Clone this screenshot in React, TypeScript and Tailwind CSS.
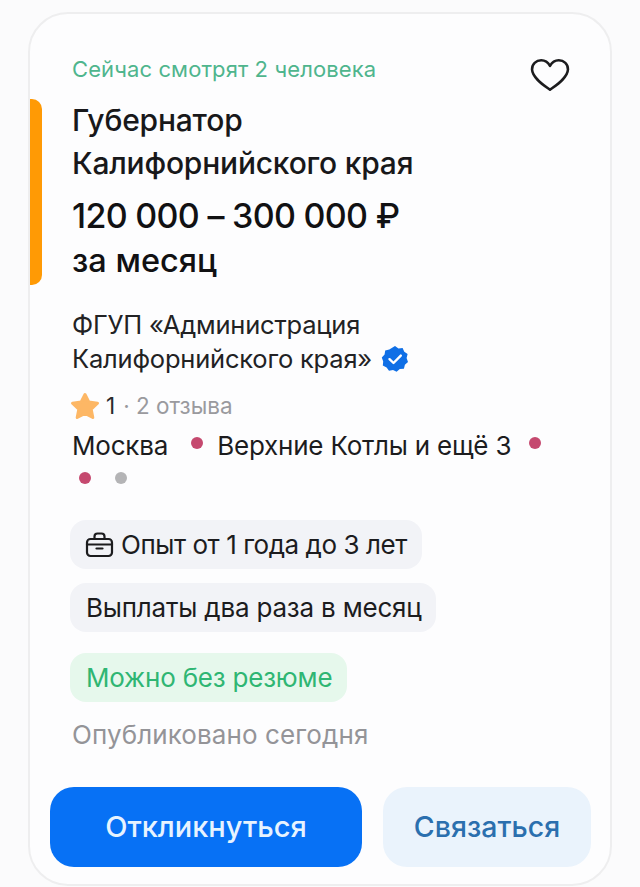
import React from 'react';

const font = { fontFamily: 'Inter, "Noto Sans", sans-serif' };

const Dot = ({ gray }: { gray?: boolean }) => (
  <span className={`inline-block w-[12px] h-[12px] rounded-full ${gray ? 'bg-[#b4b4b6]' : 'bg-[#c5496f]'}`} />
);

const Heart = () => (
  <svg width="46" height="35" viewBox="0 0 46 38" fill="none" stroke="#1c1c1e" strokeWidth="2.8" strokeLinejoin="round">
    <path d="M23 34.5 C17 30 4 22 3.5 12.5 C3.2 6.5 8 2.5 13.5 2.5 C17.8 2.5 21 5 23 8.5 C25 5 28.2 2.5 32.5 2.5 C38 2.5 42.8 6.5 42.5 12.5 C42 22 29 30 23 34.5 Z" />
  </svg>
);

const Verified = () => (
  <svg width="28" height="28" viewBox="0 0 28 28">
    <path
      fill="#0f6fe6"
      d="M14 1 L17.5 3.4 L21.6 3 L23.3 6.7 L26.6 9 L25.6 13 L27 17 L23.9 19.7 L22.9 23.7 L18.8 24.1 L15.6 26.8 L12 25 L8 25.8 L5.6 22.4 L1.8 20.6 L2.2 16.5 L0.8 12.6 L3.6 9.6 L4.2 5.5 L8.3 4.6 Z"
    />
    <path d="M8.5 14.2 L12.5 18 L19.8 10.6" fill="none" stroke="#ffffff" strokeWidth="2.4" strokeLinecap="round" strokeLinejoin="round" />
  </svg>
);

const Star = () => (
  <svg width="30" height="28" viewBox="0 0 30 28">
    <path
      fill="#fdb765"
      stroke="#fdb765"
      strokeWidth="3"
      strokeLinejoin="round"
      d="M15 2.5 L18.8 10 L27.5 11.2 L21.2 17.2 L22.8 25.5 L15 21.5 L7.2 25.5 L8.8 17.2 L2.5 11.2 L11.2 10 Z"
    />
  </svg>
);

const Briefcase = () => (
  <svg width="29" height="26" viewBox="0 0 28 26" fill="none" stroke="#1c1c1e" strokeWidth="2.2" strokeLinecap="round" strokeLinejoin="round">
    <rect x="1.5" y="7" width="25" height="17" rx="3.5" />
    <path d="M9 7 L9 4.5 C9 2.8 10.2 1.5 12 1.5 L16 1.5 C17.8 1.5 19 2.8 19 4.5 L19 7" />
    <path d="M1.5 12.5 L26.5 12.5" />
    <path d="M11 16.5 L17 16.5" />
  </svg>
);

const App: React.FC = () => {
  return (
    <div className="w-[640px] h-[887px] bg-[#fbfbfc] pt-[12px] pl-[28px] overflow-hidden" style={font}>
      <div className="relative w-[584px] h-[874px] bg-[#fdfdfe] border-2 border-[#eeeeef] rounded-[40px] pl-[42px] pr-[20px] pt-[41px]">
        {/* orange accent */}
        <div className="absolute left-0 top-[85px] w-[12px] h-[186px] bg-[#ff9a05] rounded-r-[10px]" />

        <div className="flex items-start justify-between pr-[17px]">
          <span className="text-[22px] leading-[28px] text-[#4fb58d] tracking-[0.1px]">Сейчас смотрят 2 человека</span>
          <div className="mt-[3px]"><Heart /></div>
        </div>

        <h1 className="mt-[6px] text-[30px] leading-[43px] font-medium text-[#18181a] tracking-[-0.2px]">
          Губернатор
          <br />
          Калифорнийского края
        </h1>
        <div className="mt-[9px] text-[34px] leading-[44px] font-medium text-[#111113] tracking-[-0.7px]">120 000 – 300 000 ₽</div>
        <div className="text-[32.5px] leading-[45px] font-medium text-[#111113]">за месяц</div>

        <div className="mt-[25px] text-[25.5px] leading-[34px] text-[#222224] tracking-[-0.2px]">
          ФГУП «Администрация
          <br />
          <span className="inline-flex items-center gap-[9px]">
            Калифорнийского края»
            <Verified />
          </span>
        </div>

        <div className="mt-[16px] ml-[-2px] flex items-center text-[22.5px] leading-[28px]">
          <Star />
          <span className="ml-[6px] text-[#2a2a2c]">1</span>
          <span className="ml-[8px] text-[#9a9a9e]">· 2 отзыва</span>
        </div>

        <div className="mt-[10px] flex items-center text-[26px] leading-[32px] text-[#1c1c1e] tracking-[-0.2px]">
          <span>Москва</span>
          <span className="ml-[23px] mr-[14px] mb-[6px] flex"><Dot /></span>
          <span>Верхние Котлы и ещё 3</span>
          <span className="ml-[18px] mb-[6px] flex"><Dot /></span>
        </div>
        <div className="mt-[10px] pl-[7px] flex gap-[24px]">
          <Dot />
          <Dot gray />
        </div>

        <div className="mt-[36px] ml-[-2px] flex flex-col items-start gap-[14px]">
          <div className="h-[49px] w-[352px] flex items-center gap-[7px] pl-[15px] rounded-[16px] bg-[#f2f3f7] text-[26px] text-[#1c1c1e] tracking-[-0.45px]">
            <Briefcase />
            <span>Опыт от 1 года до 3 лет</span>
          </div>
          <div className="h-[49px] flex items-center pl-[16px] pr-[14px] rounded-[16px] bg-[#f2f3f7] text-[26px] text-[#1c1c1e] tracking-[-0.2px]">
            Выплаты два раза в месяц
          </div>
          <div className="mt-[7px] h-[49px] flex items-center pl-[16px] pr-[15px] rounded-[16px] bg-[#e6f8ec] text-[26px] text-[#2fb673] tracking-[-0.2px]">
            Можно без резюме
          </div>
        </div>

        <div className="mt-[16px] text-[26px] leading-[33px] text-[#949498] tracking-[0.1px]">Опубликовано сегодня</div>

        <div className="absolute left-[20px] right-[19px] bottom-[17px] flex gap-[21px]">
          <button className="w-[312px] h-[80px] rounded-[24px] bg-[#0771f5] text-[29px] font-medium text-[#e6f3ff]">Откликнуться</button>
          <button className="flex-1 h-[80px] rounded-[24px] bg-[#eaf3fc] text-[28.5px] font-medium text-[#2b6fae]">Связаться</button>
        </div>
      </div>
    </div>
  );
};

export default App;
